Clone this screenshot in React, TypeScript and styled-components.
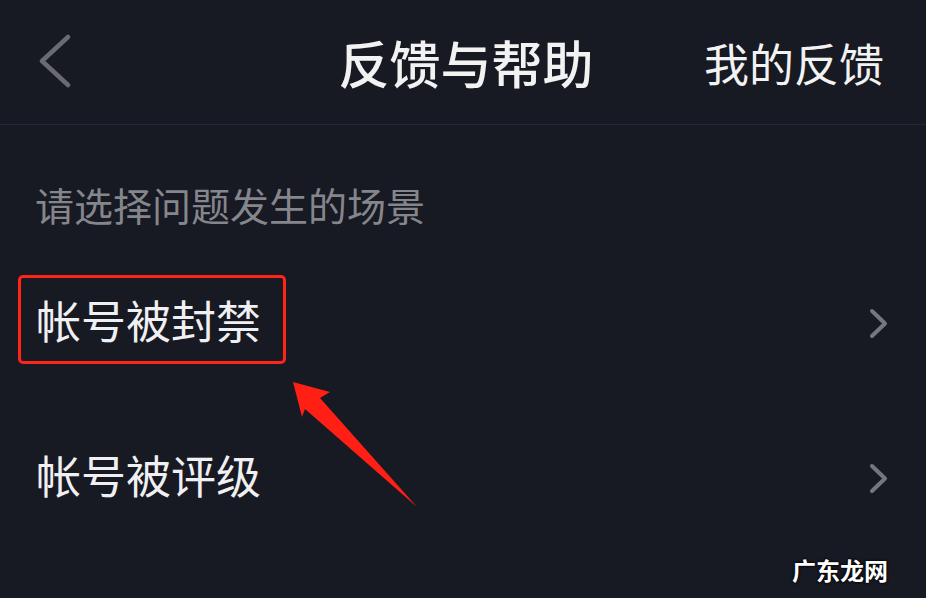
import React from "react";
import styled, { createGlobalStyle } from "styled-components";

const Global = createGlobalStyle`
  html, body { margin: 0; padding: 0; background: #171923; }
  body { font-family: "Noto Sans CJK SC", "Noto Sans", sans-serif; }
`;

const Page = styled.div`
  position: relative;
  width: 926px;
  height: 598px;
  background: #171923;
  overflow: hidden;
`;

const Header = styled.header`
  height: 124px;
  display: grid;
  grid-template-columns: 1fr auto 1fr;
  align-items: center;
  border-bottom: 1px solid #252734;
  padding: 0 42px 0 38px;
`;

const BackButton = styled.button`
  justify-self: start;
  background: none;
  border: none;
  padding: 0;
  display: flex;
  align-items: center;
  cursor: pointer;
`;

const Title = styled.h1`
  margin: 0 0 0 10px;
  font-size: 51px;
  line-height: 1;
  font-weight: 500;
  color: #f2f2f2;
  letter-spacing: 0;
`;

const HeaderLink = styled.span`
  justify-self: end;
  font-size: 45px;
  line-height: 1;
  color: #f2f2f2;
`;

const Content = styled.main`
  padding: 0 37px 0 18px;
`;

const SectionLabel = styled.div`
  margin: 60px 0 18px 17px;
  font-size: 39px;
  line-height: 1;
  color: #85868c;
`;

const Row = styled.div`
  height: 155px;
  display: flex;
  align-items: center;
  justify-content: space-between;
`;

const RowLabel = styled.span<{ $highlight?: boolean }>`
  font-size: 45px;
  line-height: 1;
  color: #f0f0f2;
  padding: 19px 22px 19px 15px;
  border: 3px solid ${(p) => (p.$highlight ? "#ff2416" : "transparent")};
  border-radius: 5px;
`;

const ChevronSlot = styled.span`
  display: flex;
  margin-top: 8px;
`;

const Overlay = styled.svg`
  position: absolute;
  left: 0;
  top: 0;
  pointer-events: none;
`;

const Watermark = styled.div`
  position: absolute;
  right: 38px;
  bottom: 16px;
  font-size: 24px;
  line-height: 1;
  font-weight: 700;
  color: #ffffff;
  text-shadow: 0 0 3px #000, 0 0 2px #000;
`;

const Chevron = ({ dir, color }: { dir: "left" | "right"; color: string }) =>
  dir === "left" ? (
    <svg width="34" height="56" viewBox="0 0 34 56">
      <polyline
        points="30,3 4,27 30,51"
        fill="none"
        stroke={color}
        strokeWidth="4.5"
        strokeLinecap="round"
        strokeLinejoin="round"
      />
    </svg>
  ) : (
    <svg width="22" height="34" viewBox="0 0 22 34">
      <polyline
        points="5,4 18,16.5 5,29"
        fill="none"
        stroke={color}
        strokeWidth="4"
        strokeLinecap="round"
        strokeLinejoin="round"
      />
    </svg>
  );

const rows = [
  { label: "帐号被封禁", highlight: true },
  { label: "帐号被评级", highlight: false },
];

export default function App() {
  return (
    <Page>
      <Global />
      <Header>
        <BackButton aria-label="返回">
          <Chevron dir="left" color="#6a6b72" />
        </BackButton>
        <Title>反馈与帮助</Title>
        <HeaderLink>我的反馈</HeaderLink>
      </Header>
      <Content>
        <SectionLabel>请选择问题发生的场景</SectionLabel>
        {rows.map((r) => (
          <Row key={r.label}>
            <RowLabel $highlight={r.highlight}>{r.label}</RowLabel>
            <ChevronSlot>
              <Chevron dir="right" color="#76777d" />
            </ChevronSlot>
          </Row>
        ))}
      </Content>
      <Overlay width="926" height="598" viewBox="0 0 926 598">
        <polygon
          points="293,382 330,392 320,398 417,507 305,409 302,417"
          fill="#ff1f14"
        />
      </Overlay>
      <Watermark>广东龙网</Watermark>
    </Page>
  );
}
